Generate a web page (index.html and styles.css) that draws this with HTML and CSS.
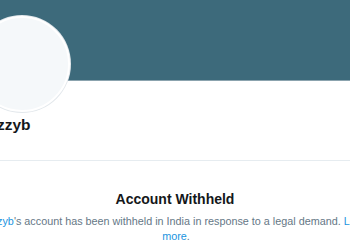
FILE: index.html
```html
<!DOCTYPE html>
<html>
<head>
<meta charset="utf-8">
<link rel="stylesheet" href="styles.css">
</head>
<body>
<div class="page">
  <div class="banner"></div>
  <div class="header">
    <div class="avatar"></div>
    <div class="name">zzyb</div>
  </div>
  <div class="withheld">
    <h2 class="title">Account Withheld</h2>
    <p class="message"><a class="link" href="#">@zzyb</a>'s account has been withheld in India in response to a legal demand. <a class="link" href="#">Learn more</a>.</p>
  </div>
</div>
</body>
</html>
```
FILE: styles.css
```css
html, body {
  margin: 0;
  padding: 0;
  overflow: hidden;
  background: #fff;
}
body {
  font-family: "Liberation Sans", Arial, sans-serif;
  color: #14171a;
  width: 350px;
  height: 250px;
}
.page {
  display: flex;
  flex-direction: column;
}
.banner {
  height: 80px;
  background: #3d6a7b;
  border-bottom: 1px solid #8ba3ae;
}
.header {
  display: flex;
  flex-direction: column;
  border-bottom: 1px solid #e6ecf0;
  height: 79px;
}
.avatar {
  width: 92px;
  height: 92px;
  border-radius: 50%;
  background: #f5f8fa;
  border: 2px solid #fff;
  box-shadow: 0 0 0 1px #e3e8ec;
  margin-top: -65px;
  margin-left: -26px;
}
.name {
  font-weight: bold;
  font-size: 15.5px;
  line-height: 18px;
  margin-top: 4px;
  margin-left: -3px;
}
.withheld {
  display: flex;
  flex-direction: column;
  align-items: flex-start;
}
.title {
  align-self: center;
  margin: 29px 0 0;
  font-size: 14px;
  line-height: 18px;
  font-weight: bold;
}
.message {
  margin: 6px 0 0 -34px;
  width: 420px;
  text-align: center;
  font-size: 10.8px;
  line-height: 15px;
  color: #657786;
}
.link {
  color: #1b95e0;
  text-decoration: none;
}
```
